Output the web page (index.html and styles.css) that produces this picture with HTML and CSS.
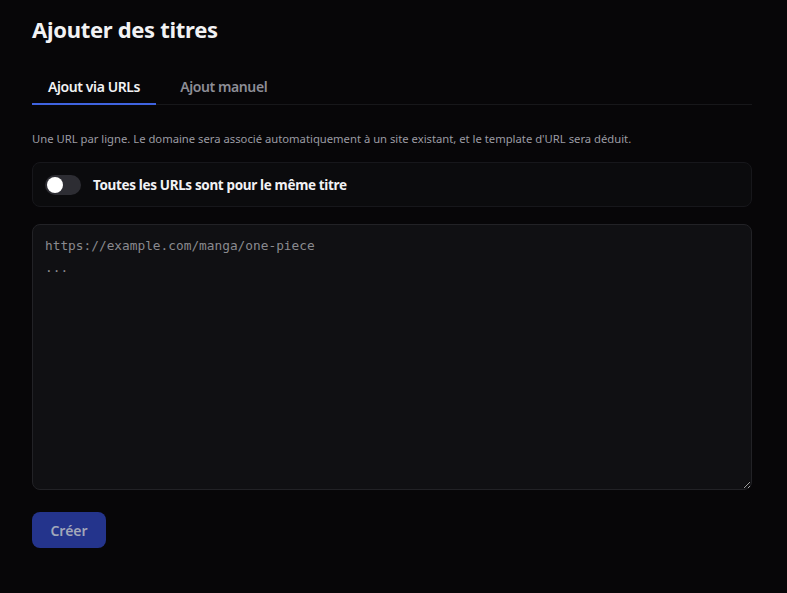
FILE: index.html
```html
<!DOCTYPE html>
<html lang="fr">
<head>
    <meta charset="UTF-8">
    <meta name="viewport" content="width=device-width, initial-scale=1.0">
    <title>Ajouter des titres</title>
    <link rel="stylesheet" href="styles.css">
</head>
<body>
<div class="page">
    <h1 class="page-title">Ajouter des titres</h1>

    <div class="tabs">
        <button class="tab active">Ajout via URLs</button>
        <button class="tab">Ajout manuel</button>
    </div>

    <p class="hint">Une URL par ligne. Le domaine sera associé automatiquement à un site existant, et le template d'URL sera déduit.</p>

    <label class="switch-card">
        <span class="switch"><span class="knob"></span></span>
        <span class="switch-label">Toutes les URLs sont pour le même titre</span>
    </label>

    <textarea class="url-input" placeholder="https://example.com/manga/one-piece&#10;..."></textarea>

    <button class="create-btn" disabled>Créer</button>
</div>
</body>
</html>
```

FILE: styles.css
```css
html, body {
    margin: 0;
    background-color: #070608;
    color: #f2f2f4;
    font-family: "Noto Sans", "Open Sans", sans-serif;
}

.page {
    width: 720px;
    padding: 12px 32px;
}

.page-title {
    margin: 0 0 26px;
    font-size: 22px;
    font-weight: 700;
    line-height: 34px;
    letter-spacing: -0.3px;
}

/* Tabs */
.tabs {
    display: flex;
    border-bottom: 1px solid #17171a;
}

.tab {
    background: none;
    border: none;
    padding: 5px 16px 7px;
    margin-bottom: -1px;
    font-family: inherit;
    font-size: 14px;
    font-weight: 600;
    letter-spacing: -0.4px;
    color: #8d8d96;
    border-bottom: 2px solid transparent;
    cursor: pointer;
}

.tab + .tab {
    margin-left: 8px;
}

.tab.active {
    color: #f2f2f4;
    border-bottom-color: #3f63e0;
}

.hint {
    margin: 26px 0 16px;
    font-size: 11.25px;
    color: #9b9ba3;
}

/* Toggle card */
.switch-card {
    display: flex;
    align-items: center;
    gap: 12px;
    height: 43px;
    padding: 0 12px;
    border: 1px solid #17171b;
    border-radius: 8px;
    background-color: #0b0b0d;
    cursor: pointer;
}

.switch {
    position: relative;
    width: 36px;
    height: 20px;
    border-radius: 10px;
    background-color: #2d2d33;
}

.switch .knob {
    position: absolute;
    left: 2px;
    top: 2px;
    width: 16px;
    height: 16px;
    border-radius: 50%;
    background-color: #ffffff;
}

.switch-label {
    font-size: 13.5px;
    font-weight: 700;
    letter-spacing: -0.35px;
    color: #f2f2f4;
}

/* URL list */
.url-input {
    display: block;
    box-sizing: border-box;
    width: 100%;
    height: 266px;
    margin-top: 17px;
    padding: 10px 12px;
    border: 1px solid #222226;
    border-radius: 8px;
    background-color: #101013;
    color: #e8e8ec;
    font-family: "DejaVu Sans Mono", monospace;
    font-size: 12.8px;
    line-height: 22px;
    resize: vertical;
    outline: none;
}

.url-input::placeholder {
    color: #8a8a8f;
}

.create-btn {
    display: block;
    margin-top: 22px;
    width: 74px;
    height: 36px;
    border: none;
    border-radius: 8px;
    background-color: #24348c;
    color: #a2a7ba;
    font-family: inherit;
    font-size: 14px;
    font-weight: 600;
}
```
